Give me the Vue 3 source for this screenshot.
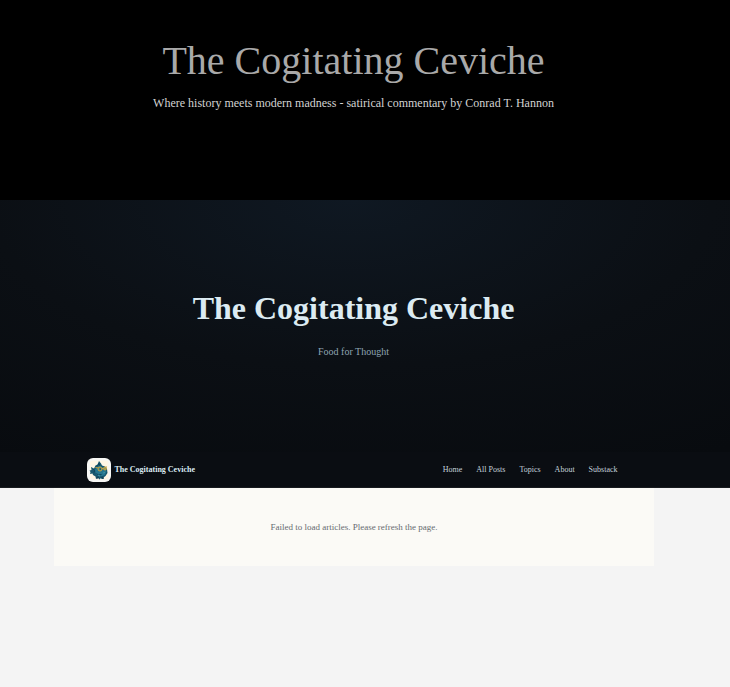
<script setup>
const links = ['Home', 'All Posts', 'Topics', 'About', 'Substack']
</script>

<template>
  <div class="page">
    <header class="banner">
      <h1>The Cogitating Ceviche</h1>
      <p>Where history meets modern madness - satirical commentary by Conrad T. Hannon</p>
    </header>
    <section class="hero">
      <h2>The Cogitating Ceviche</h2>
      <p>Food for Thought</p>
    </section>
    <nav class="nav" aria-label="Main">
      <div class="nav-inner">
        <a class="brand" href="#">
          <svg class="logo" viewBox="0 0 48 48" aria-hidden="true">
            <rect width="48" height="48" rx="12" fill="#f7f7f5" />
            <rect x="6" y="5" width="37" height="38" rx="5" fill="#fff6e5" />
            <path d="M8 18l6 3 3-6 4-2 3-7 4 5 2 4 6 2 4 5 1 8-4 6-4 3v3h-4l-1-2-3 3-3-3-4 2-1-5-5-3-1-3-5 1 1-4-2-3 4-1z" fill="#17566d" />
            <path d="M16 22l6-5 3-6 3 6 7 3 4 6-3 8-7 3-8-2-4-5z" fill="#26758d" />
            <path d="M12 22l3 3-1 4M21 16l3-5 2 5M19 31l4 3 6-1" fill="none" stroke="#0d4259" stroke-width="2" />
            <path d="M22 35l4 1M32 30l4-1" stroke="#3e94a6" stroke-width="2" />
            <path d="M17 19l6 1M29 21h5M38 19l1-2" fill="none" stroke="#c9a13a" stroke-width="2" />
            <circle cx="26" cy="22" r="4" fill="#3f7f80" stroke="#c9a13a" stroke-width="2" />
            <circle cx="36" cy="21" r="3" fill="#8f9d69" stroke="#c9a13a" stroke-width="2" />
            <circle cx="27" cy="22" r="1" fill="#092b39" />
            <path d="M22 37v3h-3M30 37v3h4" fill="none" stroke="#123b50" stroke-width="2" />
          </svg>
          <span>The Cogitating Ceviche</span>
        </a>
        <ul class="links">
          <li v-for="link in links" :key="link"><a href="#">{{ link }}</a></li>
        </ul>
      </div>
    </nav>
    <main class="content">
      <p>Failed to load articles. Please refresh the page.</p>
    </main>
  </div>
</template>

<style>
body {
  margin: 0;
  background: #f4f4f4;
}
</style>

<style scoped>
.page {
  font-family: "Liberation Serif", "Times New Roman", serif;
}
h1, h2, p, ul {
  margin: 0;
  padding: 0;
}
.banner, .hero, .nav {
  padding-right: 23px;
  text-align: center;
}
.banner {
  box-sizing: border-box;
  min-height: 200px;
  padding-top: 36px;
  background: #000;
}
.banner h1 {
  font-size: 40px;
  line-height: 50px;
  font-weight: 400;
  color: #a9a9a9;
}
.banner p {
  margin-top: 10px;
  font-size: 12px;
  line-height: 14px;
  color: #d3d3d3;
}
.hero {
  box-sizing: border-box;
  min-height: 252px;
  padding-top: 88px;
  background: radial-gradient(ellipse 90% 120% at 48% 0%, #0f1822 0%, #0b0f14 55%, #080b0f 100%);
}
.hero h2 {
  font-size: 32px;
  line-height: 40px;
  color: #dcebf2;
}
.hero p {
  margin-top: 16px;
  font-size: 10px;
  line-height: 16px;
  color: #8fa5b3;
}
.nav {
  background: #0a0d12;
  border-bottom: 1px solid #181b1f;
}
.nav-inner {
  display: flex;
  align-items: center;
  justify-content: space-between;
  box-sizing: border-box;
  max-width: 600px;
  min-height: 35px;
  margin: 0 auto;
  padding: 0 36px 0 33px;
}
.brand {
  display: flex;
  align-items: center;
  gap: 4px;
  font-size: 8px;
  font-weight: 700;
  color: #dcebf2;
  text-decoration: none;
}
.logo {
  width: 24px;
  height: 24px;
}
.links {
  display: flex;
  gap: 14px;
  list-style: none;
  font-size: 8px;
  line-height: 12px;
}
.links a {
  color: #c3d2dc;
  text-decoration: none;
}
.content {
  box-sizing: border-box;
  width: calc(100% - 22px);
  max-width: 600px;
  margin-left: max(0px, calc(50% - 311px));
  padding: 32px 16px;
  background: #fbfaf6;
  text-align: center;
}
.content p {
  font-size: 9px;
  line-height: 14px;
  color: #666b70;
}
</style>
